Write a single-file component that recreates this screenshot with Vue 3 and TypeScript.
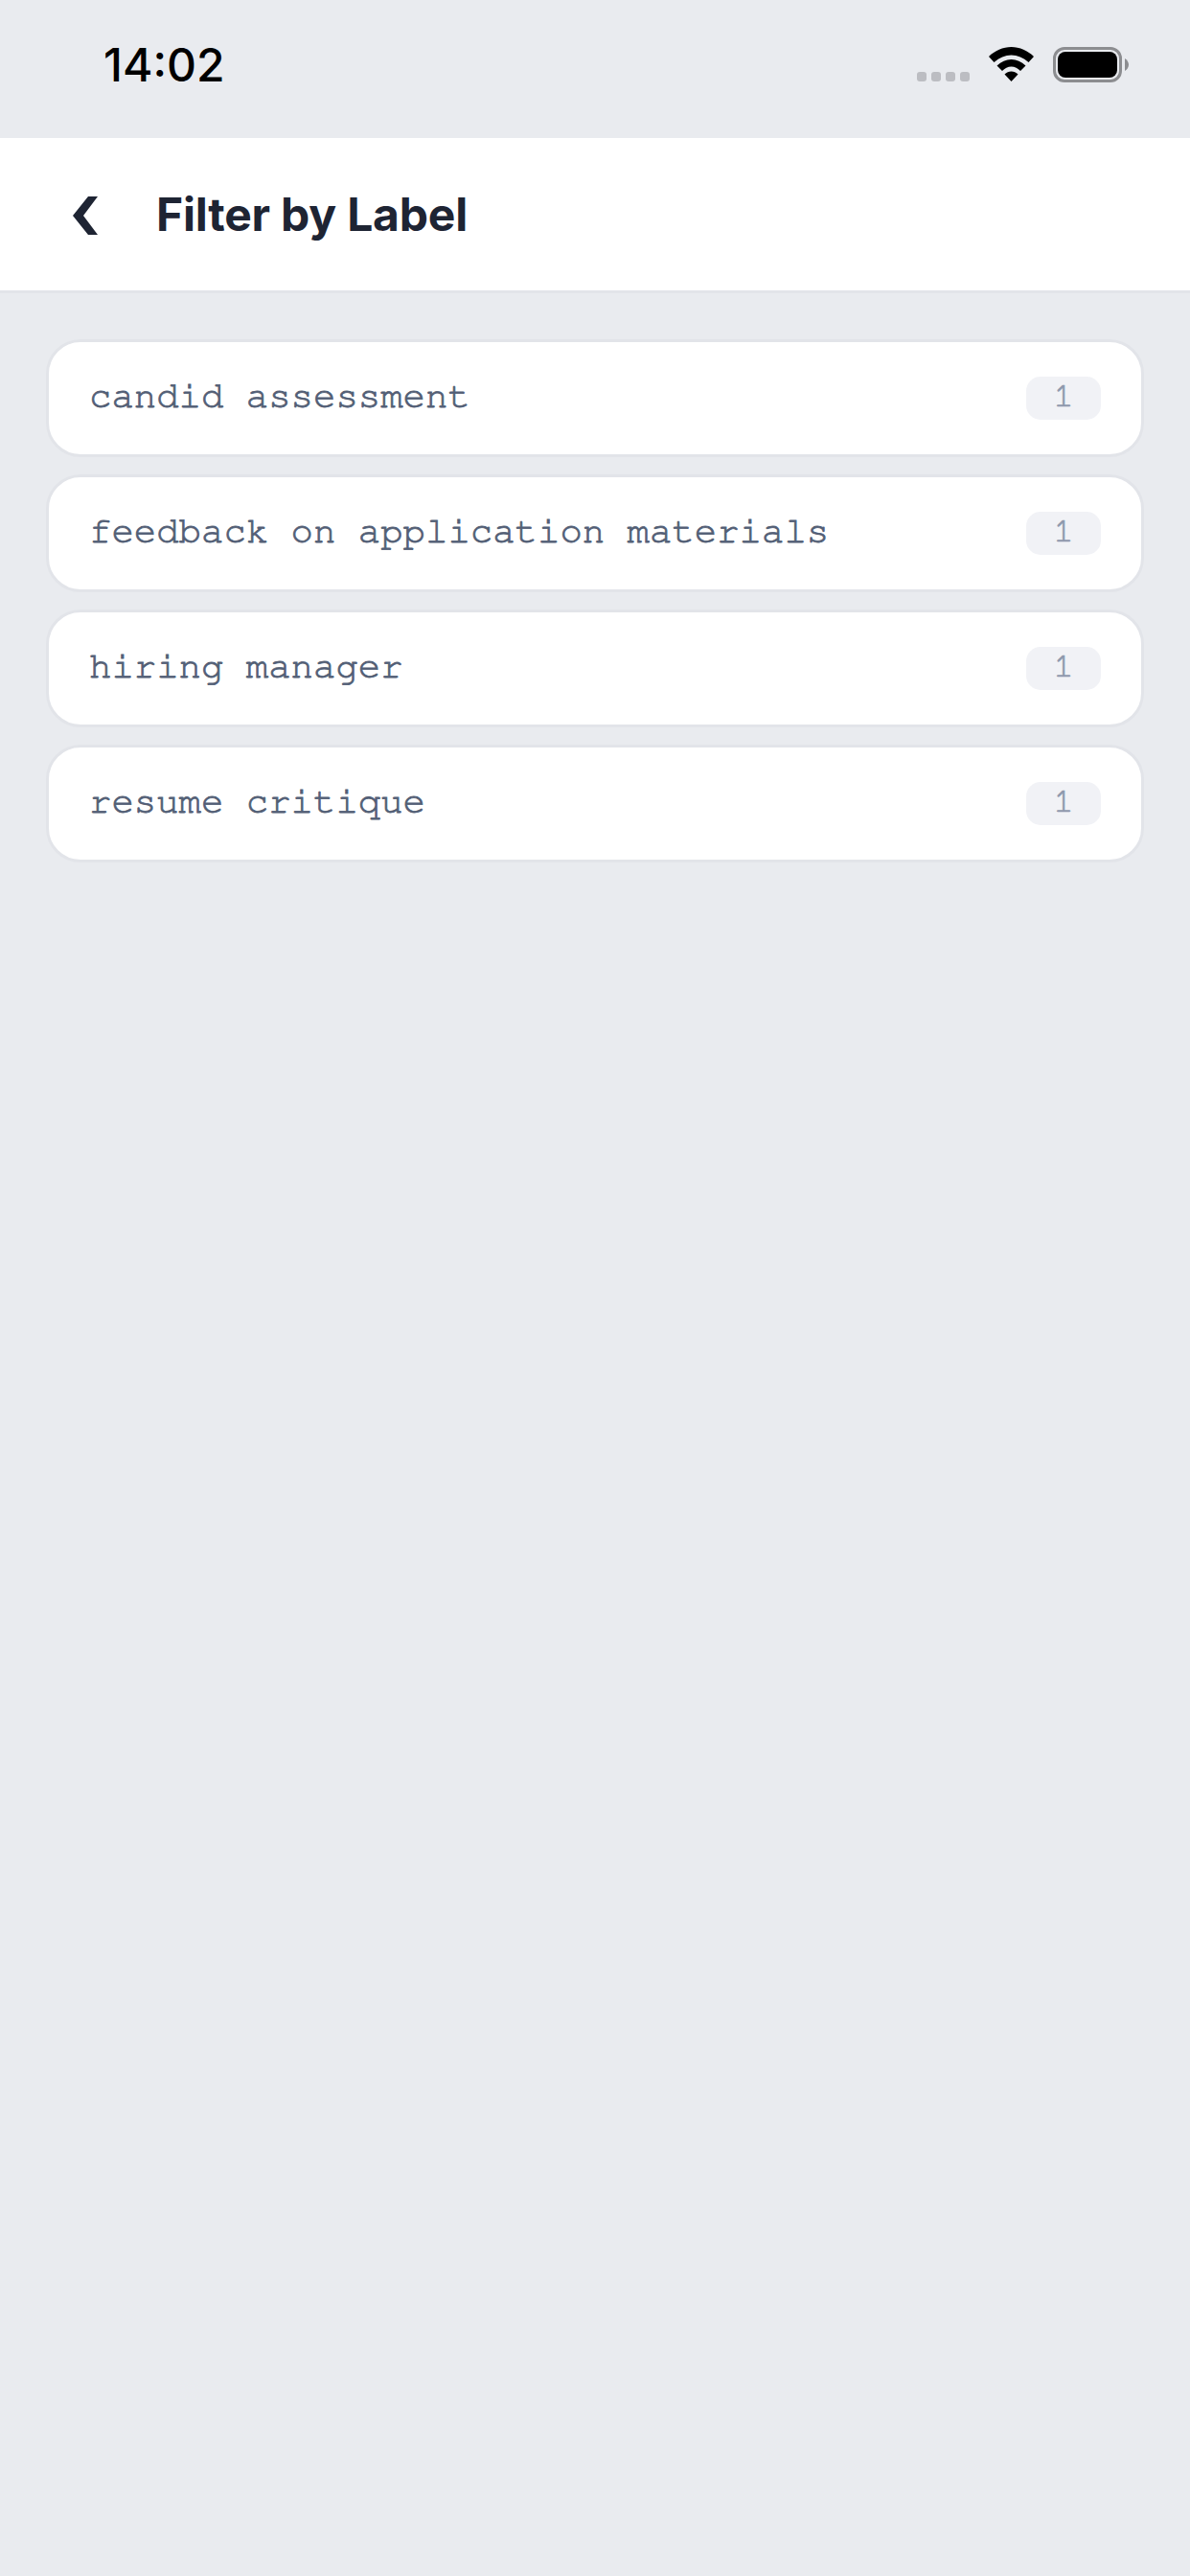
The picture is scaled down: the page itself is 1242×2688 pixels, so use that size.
<script setup lang="ts">
const labels: { name: string; count: number }[] = [
  { name: 'candid assessment', count: 1 },
  { name: 'feedback on application materials', count: 1 },
  { name: 'hiring manager', count: 1 },
  { name: 'resume critique', count: 1 },
]
</script>

<template>
  <div class="screen">
    <div class="status">
      <span class="time">14:02</span>
      <div class="status-icons">
        <div class="dots"><i></i><i></i><i></i><i></i></div>
        <svg class="wifi" width="47" height="36" viewBox="0 0 47 36">
          <path d="M0 10C6 4 15 0 23.500 0S41 4 47 10L41.500 16C36 11 30 8.500 23.500 8.500S11 11 5.500 16Z" fill="#000"/>
          <path d="M8.500 19.500C13 15.500 18 13 23.500 13S34 15.500 38.500 19.500L33 25C30.500 22.500 27 20.500 23.500 20.500S16.500 22.500 14 25Z" fill="#000"/>
          <path d="M16.500 28.500C18.500 26.500 21 25.500 23.500 25.500S28.500 26.500 30.500 28.500L23.500 36Z" fill="#000"/>
        </svg>
        <div class="battery">
          <div class="shell"><div class="fill"></div></div>
          <svg class="nub" width="4" height="13" viewBox="0 0 4 13"><path d="M0 0C2.500 1.500 4 4 4 6.500S2.500 11.500 0 13Z" fill="#8c8d90"/></svg>
        </div>
      </div>
    </div>
    <header class="bar">
      <svg class="back" width="26" height="40" viewBox="0 0 26 40">
        <path d="M16 0H26L11 20 26 40H16L0 20Z" fill="#1e2433"/>
      </svg>
      <h1 class="title">Filter by Label</h1>
    </header>
    <main class="list">
      <div v-for="l in labels" :key="l.name" class="card">
        <span class="name">{{ l.name }}</span>
        <span class="badge">{{ l.count }}</span>
      </div>
    </main>
  </div>
</template>

<style>
html, body { margin: 0; background: #e9ebef; }
</style>

<style scoped>
.screen {
  width: 1242px;
  height: 2688px;
  background: #e9ebef;
  display: flex;
  flex-direction: column;
  overflow: hidden;
}
.status {
  height: 144px;
  box-sizing: border-box;
  display: flex;
  align-items: flex-start;
  justify-content: space-between;
  padding: 0 64px 0 108px;
}
.time {
  margin-top: 39px;
  font: 550 48px/58px Inter, sans-serif;
  color: #000;
}
.status-icons {
  display: flex;
  align-items: flex-start;
  margin-top: 49px;
}
.dots {
  display: flex;
  gap: 5px;
  margin-top: 26px;
  margin-right: 20px;
}
.dots i {
  width: 10px;
  height: 10px;
  border-radius: 3px;
  background: #bcbdc2;
}
.wifi { margin-right: 20px; }
.battery { display: flex; align-items: center; }
.shell {
  width: 72px;
  height: 37px;
  box-sizing: border-box;
  border: 3px solid #8c8d90;
  border-radius: 12px;
  padding: 2px;
}
.fill {
  height: 100%;
  background: #000;
  border-radius: 8px;
}
.nub { margin-left: 3px; }
.bar {
  height: 162px;
  box-sizing: border-box;
  background: #fff;
  border-bottom: 3px solid #e2e4e9;
  display: flex;
  align-items: center;
  padding-left: 76px;
}
.back { flex: none; margin-right: 61px; margin-top: 3px; }
.title {
  margin: 0;
  font: 700 48px/60px Inter, sans-serif;
  letter-spacing: -0.2px;
  color: #1e2433;
}
.list {
  display: flex;
  flex-direction: column;
  gap: 18px;
  padding: 48px 48px 0;
}
.card {
  height: 123px;
  box-sizing: border-box;
  background: #fff;
  border: 3px solid #e2e4e9;
  border-radius: 36px;
  display: flex;
  align-items: center;
  justify-content: space-between;
  padding: 0 42px;
}
.name {
  margin-top: -4px;
  font: 400 39px/54px FreeMono, "Liberation Mono", monospace;
  color: #525e75;
  -webkit-text-stroke: 0.8px #525e75;
}
.badge {
  width: 78px;
  height: 45px;
  border-radius: 15px;
  background: #f1f2f6;
  color: #8f98ad;
  font: 400 36px/41px FreeMono, "Liberation Mono", monospace;
  -webkit-text-stroke: 0.7px #8f98ad;
  text-align: center;
}
</style>
